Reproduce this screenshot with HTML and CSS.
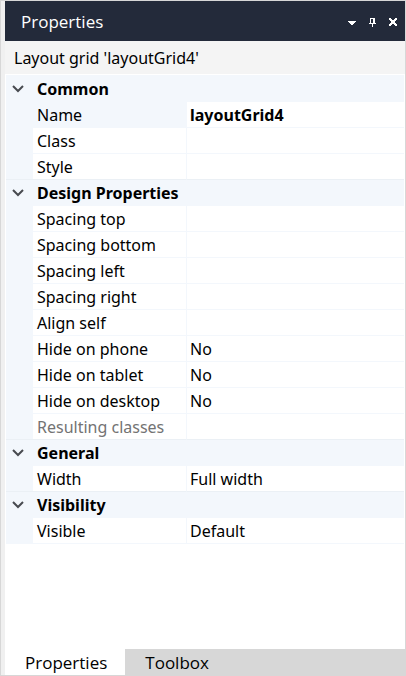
FILE: index.html
```html
<!DOCTYPE html>
<html lang="en">
<head>
<meta charset="utf-8">
<title>Properties</title>
<link rel="stylesheet" href="styles.css">
</head>
<body>
<main class="panel">
  <header class="titlebar">
    <h1 class="title">Properties</h1>
    <button class="tool" aria-label="Menu"><svg width="9" height="9" viewBox="0 0 9 9" shape-rendering="crispEdges"><path d="M1 3h8v1H1zM2 4h6v1H2zM3 5h4v1H3zM4 6h2v1H4z"/></svg></button>
    <button class="tool" aria-label="Pin"><svg width="9" height="9" viewBox="0 0 9 9" shape-rendering="crispEdges"><path d="M2 0h5v5h1v1H5v3H4V6H1V5h1zM3 1v4h2V1z" fill-rule="evenodd"/></svg></button>
    <button class="tool" aria-label="Close"><svg width="9" height="9" viewBox="0 0 9 9" shape-rendering="crispEdges"><path d="M0 0h2v1h1v1h2V1h1V0h2v2H7v1H6v2h1v1h1v2H6V7H5V6H3v1H2v1H0V6h1V5h1V3H1V2H0z"/></svg></button>
  </header>
  <p class="subject">Layout grid 'layoutGrid4'</p>
  <div class="content">
    <table class="grid">
      <colgroup><col class="col-gutter"><col class="col-name"><col></colgroup>
      <tbody>
        <tr class="group"><td><button class="toggle" aria-label="Collapse Common"><svg width="12" height="8" viewBox="0 0 12 8"><path d="M1 1l5 5 5-5"/></svg></button></td><th colspan="2">Common</th></tr>
        <tr class="selected"><td></td><th><label for="name">Name</label></th><td><input class="bold" id="name" value="layoutGrid4"></td></tr>
        <tr><td></td><th><label for="class">Class</label></th><td><input id="class"></td></tr>
        <tr><td></td><th><label for="style">Style</label></th><td><input id="style"></td></tr>
      </tbody>
      <tbody>
        <tr class="group"><td><button class="toggle" aria-label="Collapse Design Properties"><svg width="12" height="8" viewBox="0 0 12 8"><path d="M1 1l5 5 5-5"/></svg></button></td><th colspan="2">Design Properties</th></tr>
        <tr><td></td><th><label for="top">Spacing top</label></th><td><select id="top"><option></option></select></td></tr>
        <tr><td></td><th><label for="bottom">Spacing bottom</label></th><td><select id="bottom"><option></option></select></td></tr>
        <tr><td></td><th><label for="left">Spacing left</label></th><td><select id="left"><option></option></select></td></tr>
        <tr><td></td><th><label for="right">Spacing right</label></th><td><select id="right"><option></option></select></td></tr>
        <tr><td></td><th><label for="align">Align self</label></th><td><select id="align"><option></option></select></td></tr>
        <tr><td></td><th><label for="phone">Hide on phone</label></th><td><select id="phone"><option>No</option><option>Yes</option></select></td></tr>
        <tr><td></td><th><label for="tablet">Hide on tablet</label></th><td><select id="tablet"><option>No</option><option>Yes</option></select></td></tr>
        <tr><td></td><th><label for="desktop">Hide on desktop</label></th><td><select id="desktop"><option>No</option><option>Yes</option></select></td></tr>
        <tr class="readonly"><td></td><th><label for="classes">Resulting classes</label></th><td><input id="classes" readonly></td></tr>
      </tbody>
      <tbody>
        <tr class="group"><td><button class="toggle" aria-label="Collapse General"><svg width="12" height="8" viewBox="0 0 12 8"><path d="M1 1l5 5 5-5"/></svg></button></td><th colspan="2">General</th></tr>
        <tr><td></td><th><label for="width">Width</label></th><td><select id="width"><option>Full width</option></select></td></tr>
      </tbody>
      <tbody>
        <tr class="group"><td><button class="toggle" aria-label="Collapse Visibility"><svg width="12" height="8" viewBox="0 0 12 8"><path d="M1 1l5 5 5-5"/></svg></button></td><th colspan="2">Visibility</th></tr>
        <tr><td></td><th><label for="visible">Visible</label></th><td><select id="visible"><option>Default</option></select></td></tr>
      </tbody>
    </table>
  </div>
  <nav class="tabs">
    <button class="tab active">Properties</button>
    <button class="tab">Toolbox</button>
  </nav>
</main>
</body>
</html>
```
FILE: styles.css
```css
* {
  box-sizing: border-box;
}

body {
  margin: 0;
  font: 16px/24px "Noto Sans", "Open Sans", sans-serif;
  color: #000;
}

button,
input,
select {
  margin: 0;
  padding: 0;
  border: 0;
  background: none;
  color: inherit;
  font: inherit;
  outline: 0;
}

.panel {
  display: flex;
  flex-direction: column;
  min-height: 100vh;
  padding-left: 4px;
  border: 1px solid #d7d7d7;
  background: linear-gradient(to right, #f0f0f0 4px, #fff 4px);
}

.titlebar {
  display: flex;
  align-items: center;
  gap: 12px;
  height: 40px;
  padding: 2px 7px 0 16px;
  background: #232a3a;
  color: #fff;
}

.title {
  flex: 1;
  margin: 0;
  font: 400 17px/24px "Open Sans", "Noto Sans", sans-serif;
}

.tool {
  display: flex;
  fill: #fff;
}

.subject {
  height: 33px;
  margin: 0;
  padding: 2px 9px 0;
  background: #f4f4f4;
  line-height: 31px;
}

.content {
  flex: 1;
  padding: 1px 1px 0;
}

.grid {
  width: 100%;
  table-layout: fixed;
  border-spacing: 0;
  border-top: 1px solid #f3f7fc;
}

.col-gutter {
  width: 27px;
}

.col-name {
  width: 154px;
}

.grid td,
.grid th {
  height: 26px;
  padding: 0;
  border-bottom: 1px solid #f3f7fc;
  font-weight: 400;
  line-height: 23px;
  text-align: left;
  white-space: nowrap;
}

.grid th {
  padding: 2px 0 0 4px;
  border-right: 1px solid #f3f7fc;
}

.grid td:first-child,
.group th,
.selected th {
  background: #f3f7fc;
}

.grid .group th,
.grid .bold {
  font-weight: 700;
}

.grid tbody:not(:last-child) tr:last-child > * {
  border-bottom-color: #ebf0f5;
}

.readonly {
  color: #737373;
}

.grid input,
.grid select {
  display: block;
  width: 100%;
  height: 25px;
  padding: 0 0 0 3px;
  appearance: none;
}

.grid select {
  padding-top: 2px;
}

.toggle {
  display: flex;
  align-items: center;
  justify-content: center;
  width: 24px;
  height: 25px;
  fill: none;
  stroke: #484b50;
  stroke-width: 2;
}

.tabs {
  display: flex;
  height: 26px;
  background: #d7d7d7;
}

.tab {
  padding: 2px 18px 0 20px;
  font: 17px/24px "Open Sans", "Noto Sans", sans-serif;
}

.active {
  background: #fff;
}
```
